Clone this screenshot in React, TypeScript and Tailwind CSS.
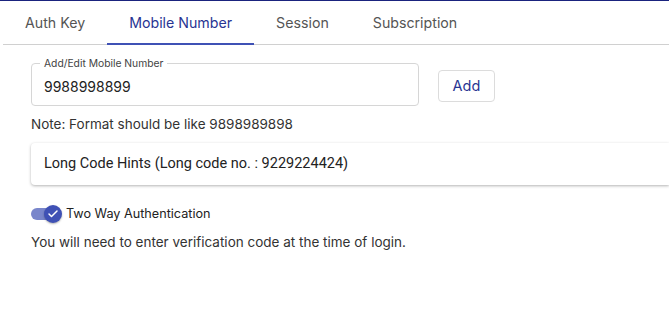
import { Check } from 'lucide-react'

const tabs = ['Auth Key', 'Mobile Number', 'Session', 'Subscription']

export default function App() {
  const active = 'Mobile Number'

  return (
    <div className="w-[669px] h-[313px] bg-white border-t border-[#1a237e] overflow-hidden font-['Inter',sans-serif]">
      {/* Tabs */}
      <div className="ml-[3px] flex border-b border-[#d0d0d0] h-[44px]">
        {tabs.map((t) => (
          <div
            key={t}
            className={`px-[22px] pt-[2px] flex items-center text-[14.2px] -mb-px border-b-2 ${
              t === active ? 'text-[#283593] border-[#3f51b5]' : 'text-[#555] border-transparent'
            }`}
          >
            {t}
          </div>
        ))}
      </div>

      <div className="pl-[31px]">
        {/* Mobile input */}
        <div className="mt-[18px] flex items-center gap-[19px]">
          <div className="relative w-[388px] h-[43px] border border-[#d6d6d6] rounded-[4px] flex items-center pl-[12px] pt-[3px]">
            <span className="absolute -top-[8px] left-[8px] px-[4px] bg-white text-[10.3px] leading-[14px] text-[#444]">
              Add/Edit Mobile Number
            </span>
            <span className="text-[14px] text-[#222]">9988998899</span>
          </div>
          <button className="w-[57px] h-[32px] mt-[2px] border border-[#dcdcdc] rounded-[4px] text-[14.5px] text-[#283593] bg-white">
            Add
          </button>
        </div>

        <div className="mt-[9px] text-[13.5px] leading-[18px] text-[#333]">Note: Format should be like 9898989898</div>

        {/* Long code card */}
        <div className="mt-[10px] h-[42px] flex items-center pl-[13px] bg-white rounded-l-[4px] shadow-[0_1px_3px_rgba(0,0,0,0.3)] font-['Roboto',sans-serif] text-[14.5px] text-[#222]">
          Long Code Hints (Long code no. : 9229224424)
        </div>

        {/* Switch */}
        <div className="mt-[19px] flex items-center">
          <div className="relative w-[32px] h-[20px] flex items-center">
            <div className="w-[26px] h-[12px] rounded-full bg-[#7986cb]" />
            <div className="absolute left-[13px] top-[1px] w-[18px] h-[18px] rounded-full bg-[#3f51b5] flex items-center justify-center shadow-[0_1px_2px_rgba(0,0,0,0.3)]">
              <Check className="w-[12px] h-[12px] text-white" strokeWidth={3} />
            </div>
          </div>
          <span className="ml-[3px] text-[12.65px] text-[#222]">Two Way Authentication</span>
        </div>

        <div className="mt-[9px] text-[13.5px] leading-[18px] text-[#333]">
          You will need to enter verification code at the time of login.
        </div>
      </div>
    </div>
  )
}
